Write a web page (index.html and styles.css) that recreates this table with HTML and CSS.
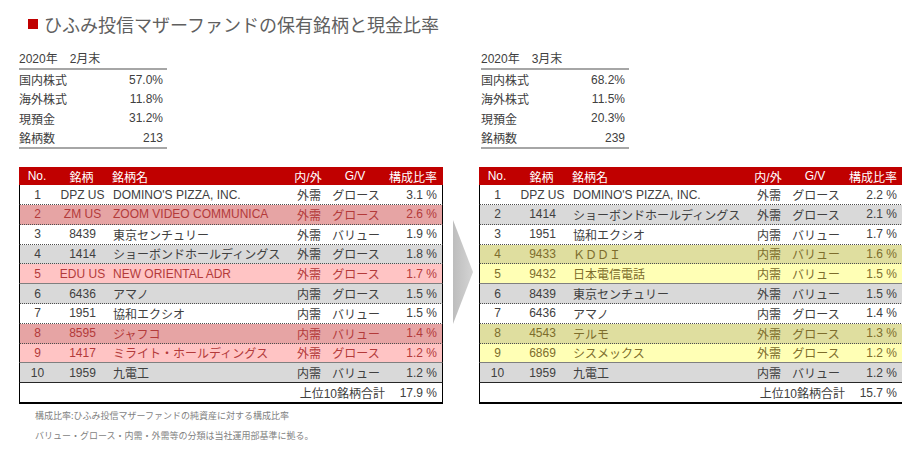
FILE: index.html
```html
<!DOCTYPE html>
<html lang="ja">
<head>
<meta charset="utf-8">
<link rel="stylesheet" href="styles.css">
</head>
<body>
<div class="title"><span class="mark"></span>ひふみ投信マザーファンドの保有銘柄と現金比率</div>
<div class="board">
  <div class="summary">
    <div class="shead">2020年　2月末</div>
    <div class="sbody">
      <div class="srow"><span>国内株式</span><span>57.0%</span></div>
      <div class="srow"><span>海外株式</span><span>11.8%</span></div>
      <div class="srow"><span>現預金</span><span>31.2%</span></div>
      <div class="srow"><span>銘柄数</span><span>213</span></div>
    </div>
  </div>
  <div></div>
  <div class="summary shift">
    <div class="shead">2020年　3月末</div>
    <div class="sbody">
      <div class="srow"><span>国内株式</span><span>68.2%</span></div>
      <div class="srow"><span>海外株式</span><span>11.5%</span></div>
      <div class="srow"><span>現預金</span><span>20.3%</span></div>
      <div class="srow"><span>銘柄数</span><span>239</span></div>
    </div>
  </div>

  <div class="holdings">
    <div class="tr head"><span class="c">No.</span><span class="c">銘柄</span><span class="l">銘柄名</span><span class="c">内/外</span><span class="c">G/V</span><span class="r">構成比率</span></div>
    <div class="tr row"><span class="c">1</span><span class="c">DPZ US</span><span class="l">DOMINO'S PIZZA, INC.</span><span class="c">外需</span><span class="c">グロース</span><span class="r">3.1 %</span></div>
    <div class="tr row pink-dark"><span class="c">2</span><span class="c">ZM US</span><span class="l">ZOOM VIDEO COMMUNICA</span><span class="c">外需</span><span class="c">グロース</span><span class="r">2.6 %</span></div>
    <div class="tr row"><span class="c">3</span><span class="c">8439</span><span class="l">東京センチュリー</span><span class="c">外需</span><span class="c">バリュー</span><span class="r">1.9 %</span></div>
    <div class="tr row gray"><span class="c">4</span><span class="c">1414</span><span class="l">ショーボンドホールディングス</span><span class="c">外需</span><span class="c">グロース</span><span class="r">1.8 %</span></div>
    <div class="tr row pink-light solid"><span class="c">5</span><span class="c">EDU US</span><span class="l">NEW ORIENTAL ADR</span><span class="c">外需</span><span class="c">グロース</span><span class="r">1.7 %</span></div>
    <div class="tr row gray"><span class="c">6</span><span class="c">6436</span><span class="l">アマノ</span><span class="c">内需</span><span class="c">グロース</span><span class="r">1.5 %</span></div>
    <div class="tr row"><span class="c">7</span><span class="c">1951</span><span class="l">協和エクシオ</span><span class="c">内需</span><span class="c">バリュー</span><span class="r">1.5 %</span></div>
    <div class="tr row pink-dark"><span class="c">8</span><span class="c">8595</span><span class="l">ジャフコ</span><span class="c">内需</span><span class="c">バリュー</span><span class="r">1.4 %</span></div>
    <div class="tr row pink-light solid"><span class="c">9</span><span class="c">1417</span><span class="l">ミライト・ホールディングス</span><span class="c">外需</span><span class="c">グロース</span><span class="r">1.2 %</span></div>
    <div class="tr row gray last"><span class="c">10</span><span class="c">1959</span><span class="l">九電工</span><span class="c">内需</span><span class="c">バリュー</span><span class="r">1.2 %</span></div>
    <div class="tr row total"><span></span><span></span><span></span><span class="sum">上位10銘柄合計</span><span class="r">17.9 %</span></div>
  </div>

  <div class="arrow">
    <svg width="20" height="104" viewBox="0 0 20 104">
      <defs>
        <linearGradient id="ag" x1="0" y1="0" x2="1" y2="0">
          <stop offset="0" stop-color="#bdbdbd"/>
          <stop offset="1" stop-color="#d4d4d4"/>
        </linearGradient>
      </defs>
      <polygon points="0,0 20,52 0,104" fill="url(#ag)"/>
    </svg>
  </div>

  <div class="holdings">
    <div class="tr head"><span class="c">No.</span><span class="c">銘柄</span><span class="l">銘柄名</span><span class="c">内/外</span><span class="c">G/V</span><span class="r">構成比率</span></div>
    <div class="tr row"><span class="c">1</span><span class="c">DPZ US</span><span class="l">DOMINO'S PIZZA, INC.</span><span class="c">外需</span><span class="c">グロース</span><span class="r">2.2 %</span></div>
    <div class="tr row gray"><span class="c">2</span><span class="c">1414</span><span class="l">ショーボンドホールディングス</span><span class="c">外需</span><span class="c">グロース</span><span class="r">2.1 %</span></div>
    <div class="tr row"><span class="c">3</span><span class="c">1951</span><span class="l">協和エクシオ</span><span class="c">内需</span><span class="c">バリュー</span><span class="r">1.7 %</span></div>
    <div class="tr row yellow-dark"><span class="c">4</span><span class="c">9433</span><span class="l">ＫＤＤＩ</span><span class="c">内需</span><span class="c">バリュー</span><span class="r">1.6 %</span></div>
    <div class="tr row yellow-light solid"><span class="c">5</span><span class="c">9432</span><span class="l">日本電信電話</span><span class="c">内需</span><span class="c">バリュー</span><span class="r">1.5 %</span></div>
    <div class="tr row gray"><span class="c">6</span><span class="c">8439</span><span class="l">東京センチュリー</span><span class="c">外需</span><span class="c">バリュー</span><span class="r">1.5 %</span></div>
    <div class="tr row"><span class="c">7</span><span class="c">6436</span><span class="l">アマノ</span><span class="c">内需</span><span class="c">グロース</span><span class="r">1.4 %</span></div>
    <div class="tr row yellow-dark"><span class="c">8</span><span class="c">4543</span><span class="l">テルモ</span><span class="c">外需</span><span class="c">グロース</span><span class="r">1.3 %</span></div>
    <div class="tr row yellow-light solid"><span class="c">9</span><span class="c">6869</span><span class="l">シスメックス</span><span class="c">外需</span><span class="c">グロース</span><span class="r">1.2 %</span></div>
    <div class="tr row gray last"><span class="c">10</span><span class="c">1959</span><span class="l">九電工</span><span class="c">内需</span><span class="c">バリュー</span><span class="r">1.2 %</span></div>
    <div class="tr row total"><span></span><span></span><span></span><span class="sum">上位10銘柄合計</span><span class="r">15.7 %</span></div>
  </div>

  <div class="notes">
    <p>構成比率:ひふみ投信マザーファンドの純資産に対する構成比率</p>
    <p>バリュー・グロース・内需・外需等の分類は当社運用部基準に拠る。</p>
  </div>
</div>
</body>
</html>
```

FILE: styles.css
```css
html, body {
  margin: 0;
  padding: 0;
  overflow: hidden;
  background: #ffffff;
}

body {
  font-family: "Liberation Sans", "Noto Sans CJK JP", sans-serif;
  color: #404040;
}

.title {
  display: flex;
  align-items: center;
  gap: 6px;
  margin: 12px 0 0 28px;
  font-size: 18px;
  line-height: 24px;
  color: #5f5f5f;
  font-family: "Noto Sans CJK JP", sans-serif;
}

.mark {
  width: 10px;
  height: 10px;
  background: #c00000;
}

.board {
  display: grid;
  grid-template-columns: 424px 36px 424px;
  padding-left: 19px;
  margin-top: 14px;
}

/* summary tables */
.summary {
  width: 148px;
  font-size: 12px;
}

.summary.shift {
  margin-left: 2px;
}

.shead {
  height: 18px;
  line-height: 18px;
  border-bottom: 2px solid #a6a6a6;
}

.sbody {
  border-bottom: 2px solid #a6a6a6;
}

.srow {
  display: flex;
  justify-content: space-between;
  align-items: center;
  height: 19.3px;
  padding-right: 4px;
}

/* holdings tables */
.holdings {
  margin-top: 18px;
  font-size: 12px;
}

.tr {
  display: grid;
  grid-template-columns: 36px 53px 183px 34px 60px 1fr;
  align-items: center;
  box-sizing: border-box;
  white-space: nowrap;
}

.tr .c { text-align: center; }
.tr .l { text-align: left; padding-left: 4px; }
.tr .r { text-align: right; padding-right: 5px; }

.head {
  height: 18px;
  background: #c00000;
  color: #ffffff;
}

.head .r { padding-right: 6px; }

.row {
  height: 19.8px;
  border-left: 1px solid #000;
  border-right: 1px solid #000;
  border-bottom: 1px dotted #4d4d4d;
  background: #ffffff;
}

.row .c:first-child {
  margin-left: -1px;
}

.row.solid {
  border-bottom: 1px solid #7f7f7f;
}

.row.last {
  border-bottom: 1px solid #262626;
}

.gray { background: #d9d9d9; }

.pink-dark { background: #e6a4a4; color: #b33a3a; }
.pink-light { background: #ffc4c4; color: #b33a3a; }

.yellow-dark { background: #dfde9f; color: #7d6d2c; }
.yellow-light { background: #ffffb5; color: #7d6d2c; }

.total {
  height: 21px;
  border-bottom: 2px solid #000;
}

.total .sum {
  grid-column: 4 / 6;
  text-align: right;
  padding-right: 1px;
}

.arrow {
  padding: 71px 0 0 10px;
  grid-row: 2;
  grid-column: 2;
}

.arrow svg {
  display: block;
}

.notes {
  grid-column: 1 / -1;
  padding-left: 16px;
  margin-top: 2px;
  font-size: 9px;
  line-height: 20px;
  color: #7f7f7f;
  font-family: "Noto Sans CJK JP", sans-serif;
}

.notes p {
  margin: 0;
}
```
